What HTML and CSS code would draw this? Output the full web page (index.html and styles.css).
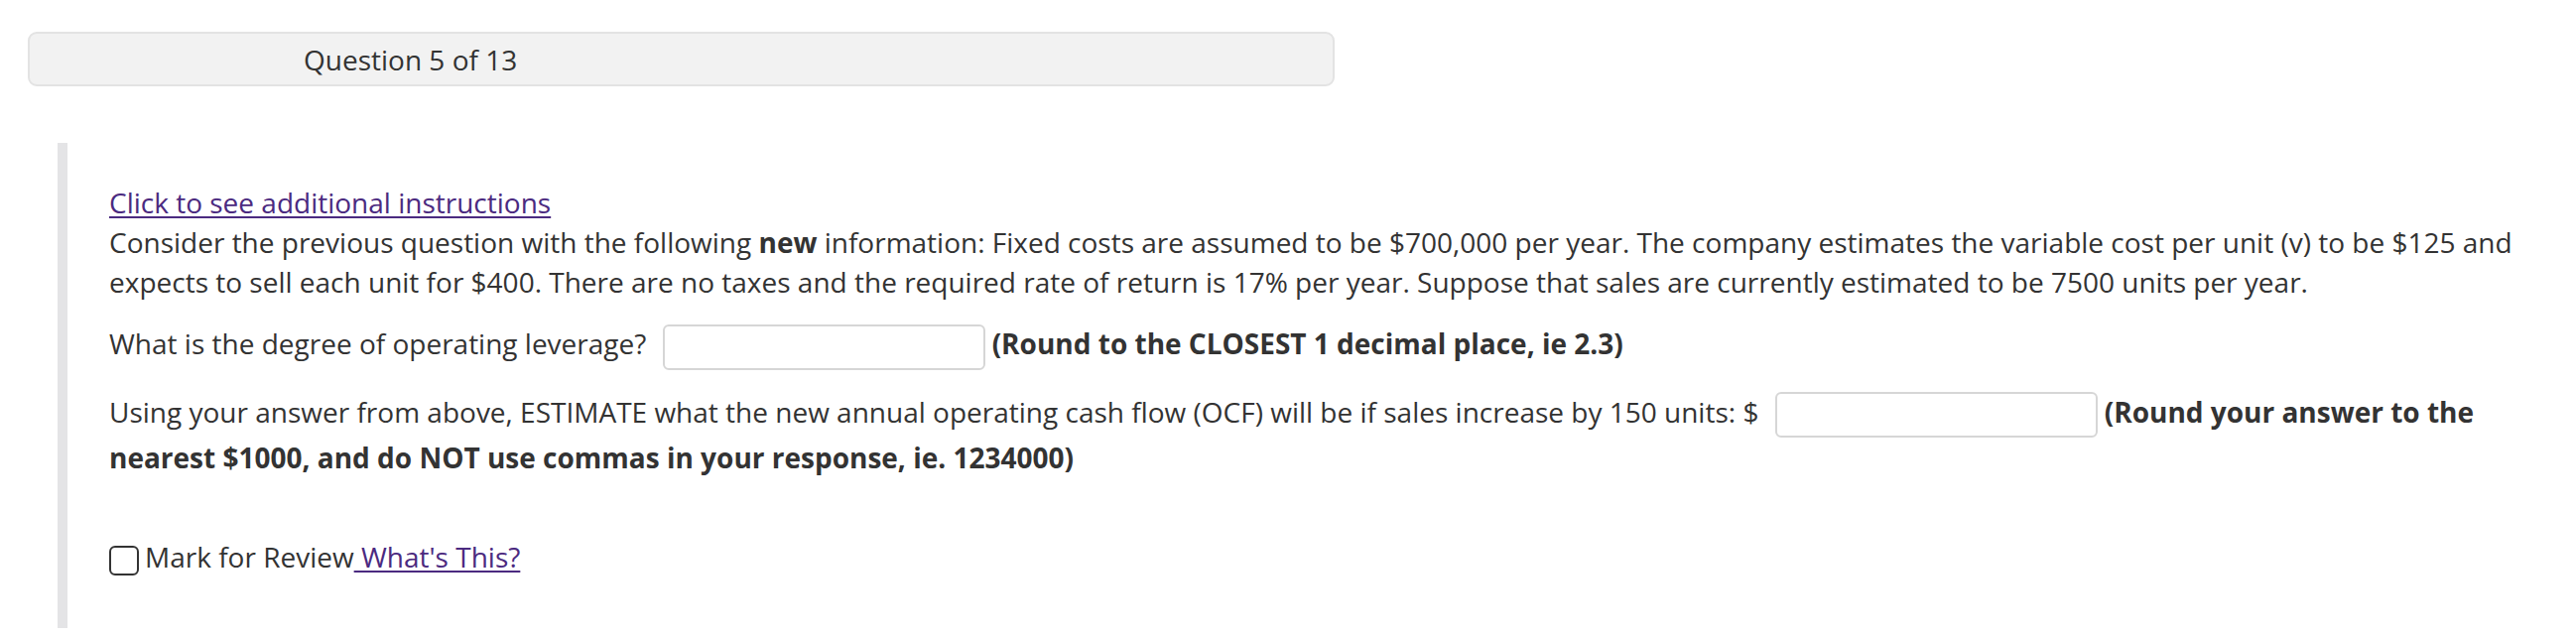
FILE: index.html
```html
<!DOCTYPE html>
<html lang="en">
<head>
    <meta charset="UTF-8">
    <title>Question 5 of 13</title>
    <link rel="stylesheet" href="styles.css">
</head>
<body>
    <div class="qnav">
        <span class="qnav-label">Question 5 of 13</span>
    </div>

    <div class="question">
        <div class="instructions">
            <a href="#">Click to see additional instructions</a>
        </div>
        <p class="prompt">Consider the previous question with the following <b>new</b> information: Fixed costs are assumed to be $700,000 per year. The company estimates the variable cost per unit (v) to be $125 and expects to sell each unit for $400. There are no taxes and the required rate of return is 17% per year. Suppose that sales are currently estimated to be 7500 units per year.</p>
        <p class="part">What is the degree of operating leverage? <input type="text" class="answer"><b>(Round to the CLOSEST 1 decimal place, ie 2.3)</b></p>
        <p class="part">Using your answer from above, ESTIMATE what the new annual operating cash flow (OCF) will be if sales increase by 150 units: $ <input type="text" class="answer"><b>(Round your answer to the nearest $1000, and do NOT use commas in your response, ie. 1234000)</b></p>

        <div class="review">
            <label><input type="checkbox" class="review-check">Mark for Review</label><a href="#"> What's This?</a>
        </div>
    </div>
</body>
</html>
```

FILE: styles.css
```css
body {
    margin: 0;
    font-family: 'Open Sans', 'Liberation Sans', sans-serif;
    font-size: 28px;
    line-height: 40px;
    color: #333;
    background: #fff;
}
a {
    color: #4b2a80;
    text-decoration: underline;
    text-underline-offset: 3px;
    text-decoration-thickness: 2px;
}
.qnav {
    box-sizing: border-box;
    width: 1317px;
    margin: 32px 0 0 28px;
    padding: 6px 0 5px 276px;
    background-color: #f2f2f2;
    border: 2px solid #e3e3e3;
    border-radius: 9px;
}
.question {
    margin: 57px 30px 0 58px;
    padding: 40px 0 52px 42px;
    border-left: 10px solid #e4e4e6;
}
.prompt {
    margin: 0;
}
.part {
    margin: 22px 0 0;
}
.answer {
    box-sizing: border-box;
    width: 325px;
    height: 46px;
    margin: 0 7px 0 9px;
    padding: 0 10px;
    border: 2px solid #d6d6d6;
    border-radius: 6px;
    font: inherit;
    vertical-align: middle;
    background: #fff;
}
.review {
    margin-top: 60px;
}
.review-check {
    appearance: none;
    -webkit-appearance: none;
    box-sizing: border-box;
    width: 30px;
    height: 30px;
    margin: 0 6px 0 0;
    border: 2px solid #333;
    border-radius: 6px;
    vertical-align: middle;
    background: #fff;
}
```
